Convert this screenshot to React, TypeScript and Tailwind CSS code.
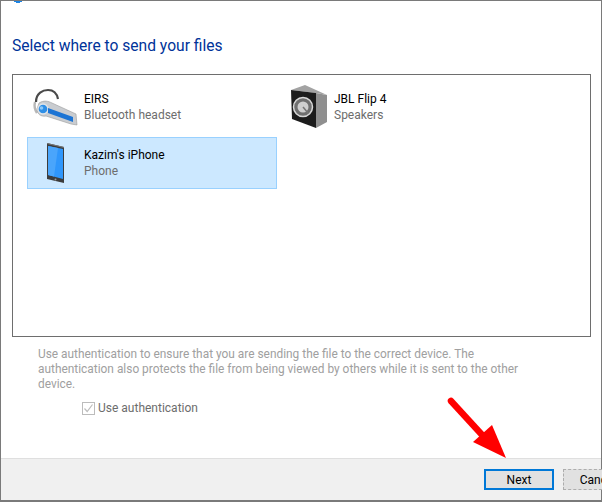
const font = "font-['Roboto','Noto_Sans',sans-serif]";

const HeadsetIcon = () => (
  <svg className="overflow-visible" width="48" height="48" viewBox="0 0 48 48">
    <path d="M0 19 C0 10 7 7 12 7 C18 7 21 11 22 16" fill="none" stroke="#4a4a4a" strokeWidth="2.2" />
    <path d="M-1 19 C-2 23 -1 27 1 30" fill="none" stroke="#b8b8b8" strokeWidth="2.4" />
    <path d="M3 20 C8 17 12 18 16 20 L40 31 L41 42 L35 41 L10 33 C5 34 1 31 1 26 Z" fill="#c9ccd0" stroke="#9a9a9a" strokeWidth="0.6" />
    <circle cx="7" cy="26" r="5" fill="#2f8fe6" stroke="#e2e5e8" strokeWidth="1.3" />
    <circle cx="5.5" cy="25" r="1.8" fill="#8cc8f8" />
    <path d="M12 25 L37 34 L37 39 L12 30 Z" fill="#1c74d4" />
  </svg>
);

const SpeakerIcon = () => (
  <svg width="48" height="48" viewBox="0 0 48 48">
    <path d="M30 10 L41 12 L41 39 L30 45 Z" fill="#8f8f8f" />
    <path d="M5 7 L19 2 L41 12 L30 10 Z" fill="#a3a3a3" />
    <path d="M5 7 L30 10 L30 45 L6 36 Z" fill="#1c1c1c" />
    <circle cx="17" cy="24" r="9.5" fill="#6f6f6f" stroke="#d8d8d8" strokeWidth="1.5" />
    <circle cx="17" cy="24" r="5.5" fill="#cfcfcf" />
    <path d="M17 24 L22 30" stroke="#777" strokeWidth="1.5" />
  </svg>
);

const PhoneIcon = () => (
  <svg width="48" height="48" viewBox="0 0 48 48">
    <path d="M11 4 L28 8 L28 44 L11 40 Z" fill="#3c3c3c" />
    <path d="M11 4 L28 8 L28 9 L11 5 Z" fill="#777" />
    <path d="M12 7 L27 10 L27 40 L12 36 Z" fill="#2f96fb" />
    <path d="M12 7 L22 9 L18 37.5 L12 36 Z" fill="#4aa5fb" />
    <circle cx="19.5" cy="40.5" r="1" fill="#999" />
  </svg>
);

const Device = ({ name, kind, icon, selected }: { name: string; kind: string; icon: React.ReactNode; selected?: boolean }) => (
  <div className={`flex h-[52px] w-[250px] items-center border pl-[8px] ${selected ? "border-[#99d1ff] bg-[#cce8ff]" : "border-transparent"}`}>
    <div className="flex w-[48px] shrink-0 justify-center">{icon}</div>
    <div className="text-[12px] leading-[16px]">
      <div className="text-black">{name}</div>
      <div className="text-[#6d6d6d]">{kind}</div>
    </div>
  </div>
);

export default function App() {
  return (
    <div className={`${font} relative flex h-[502px] w-[602px] flex-col overflow-hidden bg-white`}>
      <div className="flex h-[500px] w-[602px] flex-col border-x border-t border-[#7a7a7a]">
        <div className="flex-1 pr-[10px] pl-[11px]">
          <h1 className="mt-[34px] text-[15.6px] leading-[22px] font-normal text-[#003399]">Select where to send your files</h1>
          <div className="mt-[17px] grid h-[263px] grid-cols-[250px_250px] content-start gap-y-[4px] border border-[#6e6e6e] pt-[6px] pl-[14px]">
            <Device name="EIRS" kind="Bluetooth headset" icon={<HeadsetIcon />} />
            <Device name="JBL Flip 4" kind="Speakers" icon={<SpeakerIcon />} />
            <Device name="Kazim's iPhone" kind="Phone" icon={<PhoneIcon />} selected />
          </div>
          <p className="mt-[10px] ml-[26px] w-[500px] text-[11.9px] leading-[15px] text-[#a0a0a0]">
            Use authentication to ensure that you are sending the file to the correct device. The authentication also protects the file from being viewed by others while it is sent to the other device.
          </p>
          <label className="mt-[8px] ml-[70px] flex items-center gap-[3px] text-[12px] leading-[16px] text-[#6d6d6d]">
            <span className="flex h-[13px] w-[13px] items-center justify-center border border-[#bcbcbc]">
              <svg width="11" height="11" viewBox="0 0 11 11">
                <path d="M1.5 5.5 L4.2 8.5 L9.5 1.5" fill="none" stroke="#bcbcbc" strokeWidth="1.2" />
              </svg>
            </span>
            Use authentication
          </label>
        </div>
        <div className="flex h-[42px] shrink-0 items-center gap-[9px] border-t border-[#dfdfdf] bg-[#f0f0f0] pl-[483px]">
          <button className="h-[21px] w-[70px] shrink-0 border-2 border-[#0078d7] bg-[#e1e1e1] text-[12px] leading-[16px] text-black">Next</button>
          <button className="h-[21px] w-[70px] shrink-0 border border-dashed border-[#adadad] bg-[#e1e1e1] text-[12px] leading-[16px] text-black">Cancel</button>
        </div>
      </div>
      <div className="h-[2px] bg-[#7a7a7a]" />
      <svg className="absolute top-[1px] left-[14px]" width="8" height="2" viewBox="0 0 8 2">
        <path d="M0 0 H8 V1 H6 V2 H2 V1 H0 Z" fill="#1c84e4" />
      </svg>
      <svg className="absolute top-[396px] left-[446px]" width="65" height="66" viewBox="0 0 65 66">
        <path d="M5 5 L38 41" stroke="#ff0000" strokeWidth="6.5" strokeLinecap="round" fill="none" />
        <path d="M27 46 L46 29 L60 62 Z" fill="#ff0000" />
      </svg>
    </div>
  );
}
